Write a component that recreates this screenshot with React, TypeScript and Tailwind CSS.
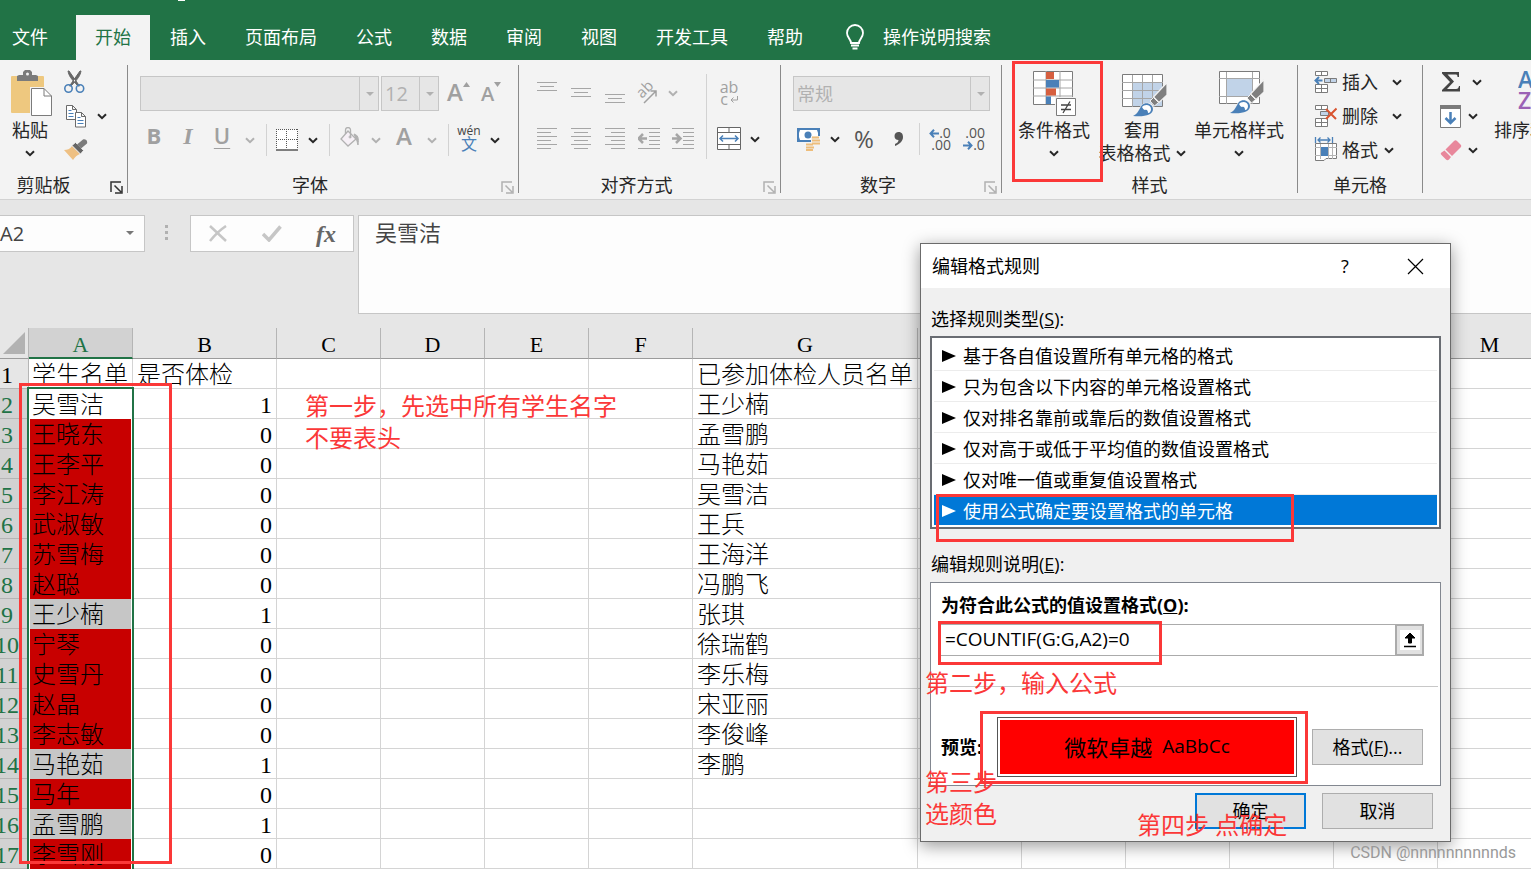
import React from 'react';

const tabs = ['开始', '插入', '页面布局', '公式', '数据', '审阅', '视图', '开发工具', '帮助'];

const columns = [
    { name: 'A', width: 104 },
    { name: 'B', width: 144 },
    { name: 'C', width: 104 },
    { name: 'D', width: 104 },
    { name: 'E', width: 104 },
    { name: 'F', width: 104 },
    { name: 'G', width: 225 },
    { name: '', width: 104 },
    { name: '', width: 104 },
    { name: '', width: 104 },
    { name: '', width: 104 },
    { name: '', width: 104 },
    { name: 'M', width: 104 },
];

const students = [
    { name: '吴雪洁', done: 1 },
    { name: '王晓东', done: 0 },
    { name: '王李平', done: 0 },
    { name: '李江涛', done: 0 },
    { name: '武淑敏', done: 0 },
    { name: '苏雪梅', done: 0 },
    { name: '赵聪', done: 0 },
    { name: '王少楠', done: 1 },
    { name: '宁琴', done: 0 },
    { name: '史雪丹', done: 0 },
    { name: '赵晶', done: 0 },
    { name: '李志敏', done: 0 },
    { name: '马艳茹', done: 1 },
    { name: '马年', done: 0 },
    { name: '孟雪鹏', done: 1 },
    { name: '李雪刚', done: 0 },
];

const checked = ['王少楠', '孟雪鹏', '马艳茹', '吴雪洁', '王兵', '王海洋', '冯鹏飞', '张琪', '徐瑞鹤', '李乐梅', '宋亚丽', '李俊峰', '李鹏'];

const ruleTypes = [
    '基于各自值设置所有单元格的格式',
    '只为包含以下内容的单元格设置格式',
    '仅对排名靠前或靠后的数值设置格式',
    '仅对高于或低于平均值的数值设置格式',
    '仅对唯一值或重复值设置格式',
    '使用公式确定要设置格式的单元格',
];

function Chevron() {
    return (
        <svg width="10" height="7" viewBox="0 0 10 7" fill="none" stroke="currentColor" strokeWidth="2">
            <path d="M1 1.2l4 4 4-4" />
        </svg>
    );
}

function DropButton({ label, muted }: { label: string; muted?: boolean }) {
    return (
        <button aria-label={label} className={`flex h-8 w-[22px] shrink-0 items-center justify-center ${muted ? 'text-[#b1b1b1]' : 'text-[#262626]'}`}>
            <Chevron />
        </button>
    );
}

function IconButton({ label, className, children }: { label: string; className: string; children: React.ReactNode }) {
    return (
        <button aria-label={label} className={`flex h-8 shrink-0 items-center justify-center ${className}`}>
            {children}
        </button>
    );
}

function Combo({ label, value, className }: { label: string; value: string; className: string }) {
    return (
        <div className={`relative h-[35px] ${className}`}>
            <select aria-label={label} defaultValue={value} className="block h-full w-full appearance-none border border-[#c6c6c6] bg-[#e6e6e6] pl-[3px] text-[#b1b1b1]">
                <option value={value}>{value}</option>
            </select>
            <span className="pointer-events-none absolute inset-y-0 right-0 flex w-5 items-center justify-center border-l border-[#c6c6c6]">
                <svg width="8" height="4" viewBox="0 0 8 4" fill="#b1b1b1"><path d="M0 0h8L4 4z" /></svg>
            </span>
        </div>
    );
}

function Group({ title, launcher, className, children }: { title: string; launcher?: 'on' | 'off'; className: string; children: React.ReactNode }) {
    return (
        <section className={`flex h-32 shrink-0 flex-col border-r border-[#8a8a8a] ${className}`}>
            <div className="h-28">{children}</div>
            <div className="flex h-4 items-center">
                <h2 className={`flex-1 text-center text-lg leading-4 ${launcher === 'on' ? 'pr-[14px]' : ''}`}>{title}</h2>
                {launcher && (
                    <button aria-label={`${title}设置`} className={`mt-1 flex w-[26px] shrink-0 justify-center pl-1 ${launcher === 'on' ? 'text-[#333]' : 'text-[#b1b1b1]'}`}>
                        <svg width="13" height="13" viewBox="0 0 13 13" fill="none" stroke="currentColor" strokeWidth="1.5">
                            <path d="M1 11V1h10" />
                            <path d="M4.500 4.500l6.500 6.500M12 5v7H5" />
                        </svg>
                    </button>
                )}
            </div>
        </section>
    );
}

function Divider({ className }: { className: string }) {
    return <span className={`w-px shrink-0 bg-[#d2d2d2] ${className}`} />;
}

function Lines({ rows }: { rows: number[][] }) {
    return (
        <svg width="22" height="24" viewBox="0 0 22 24" stroke="#a6a6a6" strokeWidth="1">
            {rows.map(([y, x1, x2]) => <path key={y} d={`M${x1} ${y + 0.5}H${x2}`} />)}
        </svg>
    );
}

function BigButton({ label, second, className, children }: { label: string; second?: string; className: string; children: React.ReactNode }) {
    return (
        <button className={`flex shrink-0 flex-col items-center pt-[5px] text-lg ${className}`}>
            {children}
            <span className="leading-[26px] whitespace-nowrap">{label}</span>
            <span className="flex h-5 items-center gap-[5px] leading-5 whitespace-nowrap">{second}<Chevron /></span>
        </button>
    );
}

function SmallButton({ label, children }: { label?: string; children: React.ReactNode }) {
    return (
        <button className="flex h-[34px] items-center gap-[5px] text-lg">
            {children}
            {label}
        </button>
    );
}

function Brush() {
    return (
        <>
            <path d="M45 12.500V25l-8 7.500-5.500-5.500z" fill="#7f7f7f" stroke="#f3f3f3" strokeWidth="1.200" />
            <path d="M31.500 27.500l5 5-4 3.500-4.500-5z" fill="#7f7f7f" stroke="#f3f3f3" strokeWidth="1" />
            <path d="M10 46.500c6-2 6-8 10-12 5-4 13-1 12 5-1 7-11 9-22 7z" fill="#f3f3f3" />
            <path d="M11 46c5-2 6-7 9-11 4-4 11-1 11 4 0 6-8 8-20 7z" fill="#4a80b8" />
            <path d="M20 37c2-3 9-3 9 2 0 2-1 4-3 4 0-2-1-4-3-3-1 0-2-1-3-3z" fill="#fff" />
        </>
    );
}

function TitleTabs() {
    return (
        <header className="relative flex h-15 shrink-0 items-end overflow-hidden bg-[#217346] text-lg text-white">
            <span className="absolute top-0 left-[178px] h-px w-[7px] bg-white" />
            <button className="h-[45px] shrink-0 pr-7 pb-0.5 pl-3">文件</button>
            <nav className="flex shrink-0 gap-px">
                {tabs.map((tab, i) => (
                    <button key={tab} className={`h-[45px] px-[19px] pb-0.5 ${i === 0 ? 'bg-[#f3f3f3] text-[#217346]' : ''}`}>{tab}</button>
                ))}
            </nav>
            <button className="ml-6 flex h-[45px] shrink-0 items-center gap-[19px] pb-0.5">
                <svg width="18" height="26" viewBox="0 0 18 26" fill="none" stroke="#fff" strokeWidth="1.8">
                    <path d="M5 19c0-4-4-5-4-10a8 8 0 0116 0c0 5-4 6-4 10z" />
                    <path d="M5 21.500h8M6.500 24.500h5" />
                </svg>
                操作说明搜索
            </button>
        </header>
    );
}

function ClipboardGroup() {
    return (
        <Group title="剪贴板" launcher="on" className="w-32">
            <div className="flex">
                <BigButton label="粘贴" className="w-[60px]">
                    <svg width="42" height="47" viewBox="0 0 42 47" className="ml-1">
                        <rect x="0" y="6" width="33" height="37" rx="1" fill="#eec87f" />
                        <path d="M6 11V6l2-1h4V2l2-2h5l2 2v3h4l2 1v5z" fill="#7b7b7b" />
                        <circle cx="16.500" cy="4" r="1.500" fill="#f3f3f3" />
                        <path d="M19 17h23v30H19z" fill="#f3f3f3" />
                        <path d="M20.500 18.500H33l7.500 7.500v19.500h-20z" fill="#fff" stroke="#7b7b7b" />
                        <path d="M33 18.500V26h7.500" fill="none" stroke="#7b7b7b" />
                    </svg>
                </BigButton>
                <div className="flex flex-col pl-1">
                    <SmallButton>
                        <svg width="21" height="24" viewBox="0 0 21 24" fill="none">
                            <path d="M4 1c1 5 3 7 4.500 9l5.500 6h1.500L5 1zM17 1c-1 5-3 7-4.500 9L7 16H5.500L16 1z" fill="#666" stroke="#666" />
                            <circle cx="4.500" cy="18.500" r="3.700" stroke="#4a80b8" strokeWidth="1.600" />
                            <circle cx="16" cy="18.500" r="3.700" stroke="#4a80b8" strokeWidth="1.600" />
                        </svg>
                    </SmallButton>
                    <div className="flex items-center gap-1">
                        <SmallButton>
                            <svg width="23" height="23" viewBox="0 0 23 23" fill="#fff" stroke="#6b6b6b">
                                <path d="M2.500.5h6l4 4v10h-10zM8.500.5v4h4" />
                                <path d="M4.500 5.500h3M4.500 8.500h5M4.500 11.500h5" stroke="#4a80b8" />
                                <path d="M11.500 7.500h6l4 4v10.500h-10zM17.500 7.500v4h4" />
                                <path d="M13.500 12.500h3M13.500 15.500h6M13.500 18.500h6" stroke="#4a80b8" />
                            </svg>
                        </SmallButton>
                        <DropButton label="复制选项" />
                    </div>
                    <SmallButton>
                        <svg width="24" height="22" viewBox="0 0 24 22">
                            <path d="M0 11c3 0 6-1 8-4l8 8c-3 1-5 3-7 6z" fill="#eec083" />
                            <path d="M8 6.500l3.500-3 8 8-3 3.500z" fill="#666" stroke="#f3f3f3" strokeWidth=".8" />
                            <path d="M13 5.500l6-5c2-1 5 1 4 4l-6 5z" fill="#7b7b7b" />
                        </svg>
                    </SmallButton>
                </div>
            </div>
        </Group>
    );
}

function FontGroup() {
    return (
        <Group title="字体" launcher="off" className="w-[391px]">
            <div className="flex gap-0.5 pt-[11px] pl-3">
                <Combo label="字体名称" value="" className="w-[239px] text-xl" />
                <Combo label="字号" value="12" className="w-[58px] text-xl" />
                <button aria-label="增大字号" className="ml-1.5 flex w-6 text-2xl leading-8 font-semibold text-[#a0a0a0]">
                    A<svg width="7" height="5" viewBox="0 0 7 5" fill="currentColor" className="mt-1.5 shrink-0"><path d="M0 5h7L3.500 0z" /></svg>
                </button>
                <button aria-label="减小字号" className="ml-2 flex w-6 text-xl leading-9 font-semibold text-[#a0a0a0]">
                    A<svg width="7" height="5" viewBox="0 0 7 5" fill="currentColor" className="mt-1.5 shrink-0"><path d="M0 0h7L3.500 5z" /></svg>
                </button>
            </div>
            <div className="flex items-center pt-3 pl-[9px] text-2xl text-[#a0a0a0]">
                <IconButton label="加粗" className="w-[34px] pb-2 text-[22px] font-bold">B</IconButton>
                <IconButton label="倾斜" className="w-[34px] pb-2 font-['Liberation_Serif',serif] font-bold italic">I</IconButton>
                <IconButton label="下划线" className="w-[34px] pb-2 text-[22px] font-semibold underline decoration-1 underline-offset-4">U</IconButton>
                <DropButton label="下划线选项" muted />
                <Divider className="mx-[5px] h-8" />
                <IconButton label="边框" className="w-[30px]">
                    <svg width="22" height="22" viewBox="0 0 22 22" fill="none" stroke="#555">
                        <path d="M.5.5h21v21H.5z" fill="#fff" stroke="none" />
                        <path d="M0 .5h22M.5 0v20M21.500 0v20M0 10.500h22M10.500 0v20" strokeDasharray="1 1" />
                        <path d="M0 21h22" strokeWidth="1.500" />
                    </svg>
                </IconButton>
                <DropButton label="边框选项" />
                <Divider className="mx-[5px] h-8" />
                <IconButton label="填充颜色" className="w-[30px] pb-1">
                    <svg width="20" height="22" viewBox="0 0 20 22" fill="none" stroke="#b1b1b1">
                        <path d="M8 4l8 8-8 7-7-7z" fill="#f6f0f6" strokeWidth="1.300" />
                        <path d="M5.500 7V3a2.500 2.500 0 015 0v8" strokeWidth="1.300" />
                        <circle cx="10" cy="10" r="1" />
                        <path d="M14 7c4 1 5 4 4 11-1-3-1-5-2-6z" fill="#b1b1b1" />
                    </svg>
                </IconButton>
                <DropButton label="填充颜色选项" muted />
                <IconButton label="字体颜色" className="w-[34px] pb-2 font-semibold">A</IconButton>
                <DropButton label="字体颜色选项" muted />
                <Divider className="mx-[5px] h-8" />
                <IconButton label="拼音" className="w-[30px] flex-col pb-1 text-[#444]">
                    <span className="text-xs leading-[12px]">wén</span>
                    <span className="text-base leading-[14px] text-[#4a80b8]">文</span>
                </IconButton>
                <DropButton label="拼音选项" />
            </div>
        </Group>
    );
}

function AlignGroup() {
    return (
        <Group title="对齐方式" launcher="off" className="w-[262px]">
            <div className="flex pl-[11px]">
                <div className="flex w-[170px] flex-col gap-[14px] pt-3">
                    <div className="flex">
                        <IconButton label="顶端对齐" className="w-[34px]"><Lines rows={[[1, 1, 21], [5, 4, 18], [9, 1, 21]]} /></IconButton>
                        <IconButton label="垂直居中" className="w-[34px]"><Lines rows={[[7, 1, 21], [11, 4, 18], [15, 1, 21]]} /></IconButton>
                        <IconButton label="底端对齐" className="w-[34px]"><Lines rows={[[13, 1, 21], [17, 4, 18], [21, 1, 21]]} /></IconButton>
                        <IconButton label="方向" className="w-[30px]">
                            <svg width="24" height="24" viewBox="0 0 24 24" fill="none" stroke="#a0a0a0">
                                <text x="0" y="0" transform="translate(7 18) rotate(-45)" fontSize="15" fill="#a0a0a0" stroke="none">ab</text>
                                <path d="M9 22L21 10M15.500 10H21v5.500" strokeWidth="1.500" />
                            </svg>
                        </IconButton>
                        <DropButton label="方向选项" muted />
                    </div>
                    <div className="flex">
                        <IconButton label="左对齐" className="w-[34px]"><Lines rows={[[1, 1, 21], [5, 1, 15], [9, 1, 21], [13, 1, 15], [17, 1, 21], [21, 1, 15]]} /></IconButton>
                        <IconButton label="居中" className="w-[34px]"><Lines rows={[[1, 1, 21], [5, 4, 18], [9, 1, 21], [13, 4, 18], [17, 1, 21], [21, 4, 18]]} /></IconButton>
                        <IconButton label="右对齐" className="w-[34px]"><Lines rows={[[1, 1, 21], [5, 7, 21], [9, 1, 21], [13, 7, 21], [17, 1, 21], [21, 7, 21]]} /></IconButton>
                        <IconButton label="减少缩进量" className="w-[34px]">
                            <svg width="22" height="24" viewBox="0 0 22 24" fill="none" stroke="#a6a6a6">
                                <path d="M0 1.500h22M11 5.500h11M11 9.500h11M11 13.500h11M11 17.500h11M0 21.500h22" />
                                <path d="M9 11.500H1M5 7l-4.500 4.500L5 16" strokeWidth="2.500" />
                            </svg>
                        </IconButton>
                        <IconButton label="增加缩进量" className="w-[34px]">
                            <svg width="22" height="24" viewBox="0 0 22 24" fill="none" stroke="#a6a6a6">
                                <path d="M0 1.500h22M11 5.500h11M11 9.500h11M11 13.500h11M11 17.500h11M0 21.500h22" />
                                <path d="M0 11.500h8M4 7l4.500 4.500L4 16" strokeWidth="2.500" />
                            </svg>
                        </IconButton>
                    </div>
                </div>
                <Divider className="mt-[9px] mr-[7px] ml-1.5 h-[85px]" />
                <div className="flex flex-col gap-[14px] pt-3">
                    <IconButton label="自动换行" className="w-[30px] flex-col text-[#a0a0a0]">
                        <span className="text-base leading-[12px]">ab</span>
                        <span className="flex items-center gap-0.5 text-base leading-[12px]">
                            c
                            <svg width="8" height="7" viewBox="0 0 8 7" fill="none" stroke="currentColor"><path d="M7.500 0v4H1M3.500 1.500L1 4l2.500 2.500" /></svg>
                        </span>
                    </IconButton>
                    <div className="flex">
                        <IconButton label="合并后居中" className="w-[30px]">
                            <svg width="24" height="24" viewBox="0 0 24 24" fill="#fff" stroke="#666">
                                <path d="M.5.5h23v22H.5z" />
                                <path d="M0 5.500h24M0 17.500h24M12 0v5.500M12 17.500V23" />
                                <path d="M3 11.500h18M6 8.500l-3 3 3 3M18 8.500l3 3-3 3" fill="none" stroke="#4a80b8" strokeWidth="1.500" />
                            </svg>
                        </IconButton>
                        <DropButton label="合并选项" />
                    </div>
                </div>
            </div>
        </Group>
    );
}

function NumberGroup() {
    return (
        <Group title="数字" launcher="off" className="w-[221px]">
            <div className="pt-[11px] pl-3">
                <Combo label="数字格式" value="常规" className="w-[197px] text-lg" />
            </div>
            <div className="flex items-center pt-3 pl-[13px] text-[#555]">
                <IconButton label="会计数字格式" className="w-[30px]">
                    <svg width="24" height="23" viewBox="0 0 24 23">
                        <path d="M0 0h23v14H0z" fill="#4a80b8" />
                        <path d="M3 2h17l1 3v5l-2 2H3L2 9V5z" fill="#fff" />
                        <circle cx="11" cy="7" r="3.500" fill="#4a80b8" />
                        <path d="M14 8h9v10h-9zM8 15h9v8H8z" fill="#f3f3f3" />
                        <path d="M15 9.500h7M15 12.500h8M15 15.500h8M9 16.500h7M9 19.500h8M9 22h7" stroke="#eebd7a" strokeWidth="2" />
                    </svg>
                </IconButton>
                <DropButton label="会计数字格式选项" />
                <IconButton label="百分比" className="w-9 text-2xl">%</IconButton>
                <IconButton label="千位分隔" className="w-[34px]">
                    <svg width="10" height="14" viewBox="0 0 10 14" fill="#555"><path d="M4.500 0C8 0 9 2.500 9 5c0 4-3 7-8 9 0-1 0-1.500 0-2 2-1 3.500-2 3.500-4C2 8 .5 6.500.5 4S2.500 0 4.500 0z" /></svg>
                </IconButton>
                <Divider className="mx-[3px] h-8" />
                <IconButton label="增加小数位数" className="w-[34px] flex-col text-sm">
                    <span className="flex items-center leading-[12px]">
                        <svg width="10" height="9" viewBox="0 0 10 9" fill="none" stroke="#4a80b8" strokeWidth="2"><path d="M10 4.500H2M5 .7L1.500 4.500 5 8.300" /></svg>
                        .0
                    </span>
                    <span className="self-end pr-1.5 leading-[12px]">.00</span>
                </IconButton>
                <IconButton label="减少小数位数" className="w-[34px] flex-col text-sm">
                    <span className="self-end pr-1.5 leading-[12px]">.00</span>
                    <span className="flex items-center leading-[12px]">
                        <svg width="10" height="9" viewBox="0 0 10 9" fill="none" stroke="#4a80b8" strokeWidth="2"><path d="M0 4.500h8M5 .7l3.500 3.800L5 8.300" /></svg>
                        .0
                    </span>
                </IconButton>
            </div>
        </Group>
    );
}

function StylesGroup() {
    return (
        <Group title="样式" className="w-[296px]">
            <div className="flex pl-2">
                <BigButton label="条件格式" className="w-[88px]">
                    <svg width="45" height="47" viewBox="0 0 45 47">
                        <path d="M1.500 1.500h39v33h-39z" fill="#fff" stroke="#7b7b7b" />
                        <path d="M1 10h40M1 18h40M1 26h40M14 1v33M28 1v33" stroke="#a6a6a6" />
                        <path d="M14 2h8v7h-8zM14 18.500h10v7H14z" fill="#d65f3f" />
                        <path d="M14 10h13v7.500H14zM14 26.500h5V34h-5z" fill="#4a80b8" />
                        <path d="M23 27h22v20H23z" fill="#f3f3f3" />
                        <path d="M24.500 28.500h19v17h-19z" fill="#fff" stroke="#7b7b7b" />
                        <path d="M29 35h10M29 39.500h10M38 31.500l-7 11.500" stroke="#444" strokeWidth="1.300" />
                    </svg>
                </BigButton>
                <BigButton label="套用" second="表格格式" className="w-[88px]">
                    <svg width="45" height="47" viewBox="0 0 45 47" className="ml-1">
                        <path d="M.5 4.500h40v32H.5z" fill="#fff" stroke="#7b7b7b" />
                        <path d="M11 13h29v23H11z" fill="#c1d3e8" />
                        <path d="M0 12.500h41M0 20.500h41M0 28.500h41M10.500 5v32M20.500 5v32M30.500 5v32" stroke="#a6a6a6" />
                        <Brush />
                    </svg>
                </BigButton>
                <BigButton label="单元格样式" className="w-[106px]">
                    <svg width="45" height="47" viewBox="0 0 45 47" className="ml-1">
                        <path d="M.5 1.500h40v32H.5z" fill="#fff" stroke="#7b7b7b" />
                        <path d="M8 9h26v18H8z" fill="#c1d3e8" />
                        <path d="M0 8.500h41M0 26.500h41M7.500 2v32M33.500 2v32" stroke="#a6a6a6" />
                        <g transform="translate(0 -3)"><Brush /></g>
                    </svg>
                </BigButton>
            </div>
        </Group>
    );
}

function CellsGroup() {
    return (
        <Group title="单元格" className="w-[125px]">
            <div className="flex flex-col pl-4">
                <div className="flex items-center gap-2">
                    <SmallButton label="插入">
                        <svg width="23" height="23" viewBox="0 0 23 23" fill="#fff" stroke="#7b7b7b">
                            <path d="M1.500.5h12v4h-12zM7.500.5v4M1.500 13.500h12v8h-12zM7.500 13.500v8M1.500 17.500h12" />
                            <path d="M10.500 7.500h12v4h-12zM16.500 7.500v4" fill="#c1d3e8" />
                            <path d="M8.500 9.500H2M5 6l-3.500 3.500L5 13" fill="none" stroke="#4a80b8" strokeWidth="2" />
                        </svg>
                    </SmallButton>
                    <DropButton label="插入选项" />
                </div>
                <div className="flex items-center gap-2">
                    <SmallButton label="删除">
                        <svg width="23" height="23" viewBox="0 0 23 23" fill="#fff" stroke="#7b7b7b">
                            <path d="M1.500.5h12v4h-12zM7.500.5v4M1.500 13.500h12v8h-12zM7.500 13.500v8M1.500 17.500h12" />
                            <path d="M6.500 6.500h8v4h-8z" fill="#c1d3e8" />
                            <path d="M12 4l10 10M22.500 3.500L12 14" stroke="#d8532f" strokeWidth="2" />
                        </svg>
                    </SmallButton>
                    <DropButton label="删除选项" />
                </div>
                <div className="flex items-center">
                    <SmallButton label="格式">
                        <svg width="23" height="26" viewBox="0 0 23 26" fill="#fff" stroke="#7b7b7b">
                            <path d="M1.500 6.500h21v15H12l-2 2H1.500z" />
                            <path d="M1 10.500h22M1 18.500h22M6.500 7v15M14.500 7v15M18.500 7v15" stroke="#b5b5b5" />
                            <path d="M7 10h7v9H7z" fill="#4a80b8" stroke="none" />
                            <path d="M1.500 0v6M18.500 0v6M4 3h12M6.500.5L4 3l2.500 2.500M13.500.5L16 3l-2.500 2.500" fill="none" stroke="#4a80b8" strokeWidth="1.300" />
                        </svg>
                    </SmallButton>
                    <DropButton label="格式选项" />
                </div>
            </div>
        </Group>
    );
}

function EditGroup() {
    return (
        <div className="flex h-28 shrink-0 pl-4">
            <div className="flex w-[55px] flex-col">
                <div className="flex items-center gap-1">
                    <SmallButton>
                        <svg width="23" height="22" viewBox="0 0 23 22" fill="#444"><path d="M3 1h17v5h-1.500c0-2-.5-2.500-2.500-2.500H8.500L15 10.500 8 18h9c2 0 2.500-1 3-3H21v5.500H3V19l8-8-8-8.500z" /></svg>
                    </SmallButton>
                    <DropButton label="求和选项" />
                </div>
                <div className="flex items-center">
                    <SmallButton>
                        <svg width="23" height="23" viewBox="0 0 23 23">
                            <path d="M1.500.5h20v22h-20z" fill="#fff" stroke="#7b7b7b" />
                            <path d="M1 0h21v4H1z" fill="#7b7b7b" />
                            <path d="M11.500 7v11M6.500 13l5 5 5-5" fill="none" stroke="#4a80b8" strokeWidth="2.500" />
                        </svg>
                    </SmallButton>
                    <DropButton label="填充选项" />
                </div>
                <div className="flex items-center">
                    <SmallButton>
                        <svg width="23" height="21" viewBox="0 0 23 21" fill="#e8879b">
                            <path d="M15 1c1-1 2-1 3 0l3.500 3.500c1 1 1 2 0 3L13 16 6.500 9.500z" />
                            <path d="M5.500 10.500l6.500 6.500-2 2.500c-1 1-2 1-3 0L2.500 15c-1-1-1-2 0-2.500z" />
                        </svg>
                    </SmallButton>
                    <DropButton label="清除选项" />
                </div>
            </div>
            <button className="flex flex-col pt-[5px] text-lg">
                <svg width="44" height="47" viewBox="0 0 44 47" className="ml-6">
                    <text x="0" y="18" fontSize="23" fontWeight="600" fill="#4a80b8">A</text>
                    <text x="0" y="39" fontSize="23" fontWeight="600" fill="#9b62b5">Z</text>
                </svg>
                <span className="leading-[26px] whitespace-nowrap">排序和筛选</span>
            </button>
        </div>
    );
}

function FormulaBar() {
    return (
        <div className="flex h-32 shrink-0 items-start bg-[#e6e6e6] pt-[15px] text-[#444]">
            <div className="relative w-[145px] shrink-0">
                <input aria-label="名称框" defaultValue="A2" className="block h-[37px] w-full border border-l-0 border-[#c6c6c6] bg-[#fdfdfd] text-xl" />
                <svg width="8" height="4" viewBox="0 0 8 4" fill="#777" className="absolute top-4 right-[11px]"><path d="M0 0h8L4 4z" /></svg>
            </div>
            <svg width="45" height="37" viewBox="0 0 45 37" fill="#b1b1b1" className="shrink-0">
                <path d="M20 10h3v3h-3zM20 16h3v3h-3zM20 22h3v3h-3z" />
            </svg>
            <div className="flex h-[37px] w-[164px] shrink-0 items-center border border-[#c6c6c6] bg-[#fdfdfd]">
                <button aria-label="取消输入" className="flex w-[54px] justify-center">
                    <svg width="18" height="17" viewBox="0 0 18 17" fill="none" stroke="#c6c6c6" strokeWidth="2.500"><path d="M1 1l16 15M17 1C11 5 5 11 1 16" /></svg>
                </button>
                <button aria-label="输入" className="flex w-[54px] justify-center">
                    <svg width="20" height="17" viewBox="0 0 20 17" fill="none" stroke="#c6c6c6" strokeWidth="3.500"><path d="M1 9l6 6L18.500 1.500" /></svg>
                </button>
                <button className="w-[54px] font-['Liberation_Serif',serif] text-2xl leading-8 font-bold text-[#666] italic">fx</button>
            </div>
            <input aria-label="编辑栏" defaultValue="吴雪洁" className="ml-1 h-[99px] min-w-0 flex-1 border border-r-0 border-[#c6c6c6] bg-[#fdfdfd] pb-[68px] pl-4 text-[22px] leading-7" />
        </div>
    );
}

function Sheet() {
    return (
        <main className="relative min-h-0 flex-1 overflow-hidden bg-white font-['Liberation_Serif','Noto_Sans_CJK_SC',serif] text-2xl font-light text-black">
            <table className="-ml-[14px] w-[1556px] table-fixed border-separate border-spacing-0">
                <colgroup>
                    <col style={{ width: 43 }} />
                    {columns.map(({ width }, i) => <col key={i} style={{ width }} />)}
                </colgroup>
                <thead>
                    <tr className="h-[31px] bg-[#e6e6e6]">
                        <td className="border-r border-b border-[#9b9b9b] border-r-[#b5b5b5] p-0">
                            <svg width="22" height="22" viewBox="0 0 22 22" fill="#b2b2b2" className="mr-[3px] ml-auto"><path d="M22 0v22H0z" /></svg>
                        </td>
                        {columns.map(({ name }, i) => (
                            <th
                                key={i}
                                scope="col"
                                className={`border-r border-r-[#b5b5b5] p-0 pt-1 text-[22px] leading-6 font-normal ${name === 'A' ? 'border-b-2 border-b-[#217346] bg-[#d2d2d2] text-[#217346]' : 'border-b border-b-[#9b9b9b]'}`}
                            >
                                {name}
                            </th>
                        ))}
                    </tr>
                </thead>
                <tbody>
                    {Array.from({ length: 17 }, (_, i) => {
                        const student = students[i - 1];
                        const fill = i < 2 ? 'bg-white' : student.done ? 'bg-[#c6c6c6]' : 'bg-[#c80000]';
                        return (
                            <tr key={i} className="h-[30px] leading-[26px] whitespace-nowrap">
                                <th
                                    scope="row"
                                    className={`border-r border-b border-[#b5b5b5] p-0 pt-[3px] font-normal ${i === 0 ? 'bg-[#e6e6e6]' : 'bg-[#d2d2d2] text-[#217346]'}`}
                                >
                                    {i + 1}
                                </th>
                                <td className={`border-r border-b p-0 pt-[3px] pl-[3px] ${i === 0 ? 'border-[#d4d4d4]' : 'border-transparent'} ${fill}`}>
                                    {i === 0 ? '学生名单' : student.name}
                                </td>
                                <td className={`border-r border-b border-[#d4d4d4] p-0 px-1 pt-[3px] ${i === 0 ? '' : 'text-right'}`}>
                                    {i === 0 ? '是否体检' : student.done}
                                </td>
                                {columns.slice(2).map(({ name }, j) => (
                                    <td key={j} className="border-r border-b border-[#d4d4d4] p-0 pt-[3px] pl-1">
                                        {name === 'G' && (i === 0 ? '已参加体检人员名单' : checked[i - 1])}
                                    </td>
                                ))}
                            </tr>
                        );
                    })}
                </tbody>
            </table>
            <div className="pointer-events-none absolute top-[59px] -bottom-2 left-[27px] w-[107px] border-2 border-[#217346] shadow-[inset_0_0_0_1px_white]" />
        </main>
    );
}

function RuleDialog() {
    return (
        <div role="dialog" aria-label="编辑格式规则" className="absolute top-[243px] left-[920px] w-[531px] border border-[#6b6b6b] bg-[#f0f0f0] pb-3 text-lg text-black shadow-[0_4px_16px_rgba(0,0,0,0.4)]">
            <div className="flex h-11 items-center bg-white pr-[26px] pl-[11px]">
                <h1 className="flex-1">编辑格式规则</h1>
                <button aria-label="帮助" className="w-5">?</button>
                <button aria-label="关闭" className="ml-[52px]">
                    <svg width="17" height="17" viewBox="0 0 17 17" stroke="#000" strokeWidth="1.200"><path d="M1 1l15 15M16 1L1 16" /></svg>
                </button>
            </div>
            <div className="px-[9px]">
                <h2 className="pt-[17px] pb-[3px] pl-px leading-7">选择规则类型(<u>S</u>):</h2>
                <ul className="border-2 border-[#696c72] bg-white p-0.5">
                    {ruleTypes.map((rule, i) => (
                        <li key={rule} className={i === 5 ? '' : 'border-b border-[#ececec]'}>
                            <button className={`flex h-[30px] w-full items-center gap-[7px] pt-0.5 pl-2 ${i === 5 ? 'bg-[#0078d7] text-white' : ''}`}>
                                <svg width="14" height="12" viewBox="0 0 14 12" fill="currentColor"><path d="M0 0l14 6-14 6z" /></svg>
                                {rule}
                            </button>
                        </li>
                    ))}
                </ul>
                <h2 className="pt-[21px] pb-1 pl-px leading-7">编辑规则说明(<u>E</u>):</h2>
                <div className="border border-[#828790] bg-white pb-2">
                    <label htmlFor="formula" className="block pt-2 pl-2.5 leading-7 font-bold">为符合此公式的值设置格式(<u>O</u>):</label>
                    <div className="mt-[5px] flex h-8 pr-4 pl-[9px]">
                        <input id="formula" defaultValue="=COUNTIF(G:G,A2)=0" className="min-w-0 flex-1 border border-[#ababab] bg-white pl-1 text-[19px]" />
                        <button aria-label="选择区域" className="flex w-7 items-center justify-center border-2 border-l border-[#ababab] bg-[#e1e1e1]">
                            <span className="flex h-5 w-5 items-center justify-center bg-white">
                                <svg width="14" height="16" viewBox="0 0 14 16" stroke="#000" fill="#000"><path d="M1 14.500h12" fill="none" strokeWidth="1.500" /><path d="M7 1l5 5H8.500v5h-3V6H2z" /></svg>
                            </span>
                        </button>
                    </div>
                    <hr className="mt-[30px] mr-0.5 ml-2.5 border-[#c8c8c8]" />
                    <div className="flex items-center pt-[30px] pr-[17px] pl-2.5">
                        <span className="w-14 shrink-0 font-bold">预览:</span>
                        <div className="flex-1 border border-[#555] p-0.5">
                            <div className="flex h-[54px] items-center justify-center gap-2.5 bg-[#f00]">
                                <span className="text-[22px]">微软卓越</span>
                                <span className="text-[19px]">AaBbCc</span>
                            </div>
                        </div>
                        <button className="ml-[15px] h-9 w-[111px] border border-[#adadad] bg-[#e1e1e1]">格式(<u>F</u>)...</button>
                    </div>
                </div>
                <div className="flex justify-end gap-4 pt-[7px] pr-2">
                    <button className="h-9 w-[111px] border-2 border-[#0078d7] bg-[#e1e1e1]">确定</button>
                    <button className="h-9 w-[111px] border border-[#adadad] bg-[#e1e1e1]">取消</button>
                </div>
            </div>
        </div>
    );
}

// Red step-by-step marks that sit on top of the window
function Annotations() {
    return (
        <div className="pointer-events-none absolute inset-0 text-2xl leading-8 whitespace-nowrap text-[#fb3838]">
            <div className="absolute top-[61px] left-[1012px] h-[121px] w-[91px] border-3" />
            <div className="absolute top-[383px] left-[19px] h-[481px] w-[153px] border-3" />
            <div className="absolute top-[494px] left-[936px] h-[48px] w-[358px] border-3" />
            <div className="absolute top-[621px] left-[938px] h-[44px] w-[224px] border-3" />
            <div className="absolute top-[711px] left-[980px] h-[73px] w-[328px] border-3" />
            <p className="absolute top-[390px] left-[305px]">第一步，先选中所有学生名字<br />不要表头</p>
            <p className="absolute top-[667px] left-[925px]">第二步，输入公式</p>
            <p className="absolute top-[766px] left-[925px]">第三步<br />选颜色</p>
            <p className="absolute top-[809px] left-[1137px]">第四步 点确定</p>
            <span className="absolute right-[15px] bottom-1 font-[Roboto,sans-serif] text-base leading-6 text-[#999]">CSDN @nnnnnnnnnnds</span>
        </div>
    );
}

export default function App() {
    return (
        <div className="relative flex h-screen flex-col overflow-hidden bg-[#e6e6e6] font-['Open_Sans','Noto_Sans_CJK_SC',sans-serif] text-[#262626]">
            <TitleTabs />
            <div className="flex h-[140px] shrink-0 overflow-hidden border-b border-[#d2d2d2] bg-[#f3f3f3] pt-[5px]">
                <ClipboardGroup />
                <FontGroup />
                <AlignGroup />
                <NumberGroup />
                <StylesGroup />
                <CellsGroup />
                <EditGroup />
            </div>
            <FormulaBar />
            <Sheet />
            <RuleDialog />
            <Annotations />
        </div>
    );
}
